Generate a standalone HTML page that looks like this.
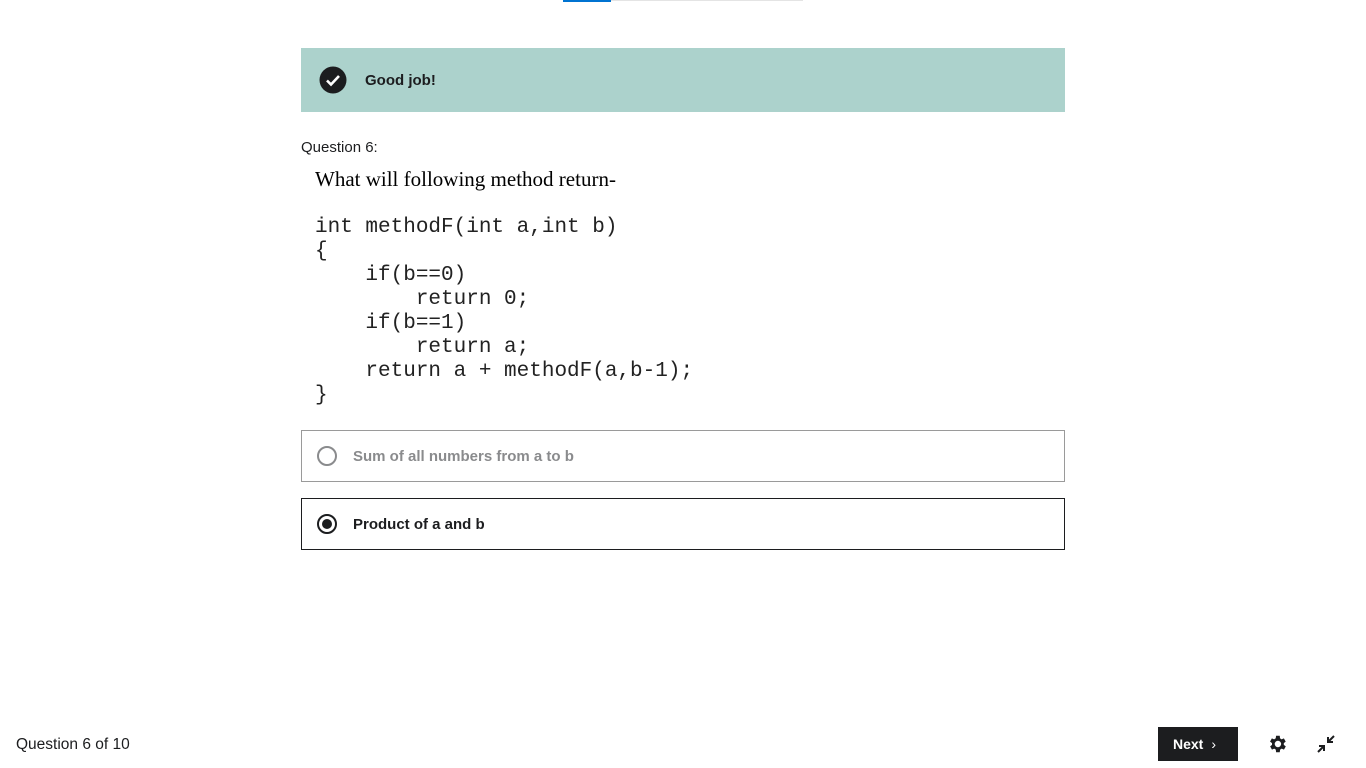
<!DOCTYPE html>
<html><head><meta charset="utf-8"><style>
body{margin:0;width:1366px;height:768px;position:relative;background:#fff;font-family:"Liberation Sans",sans-serif;color:#1c1d1f;overflow:hidden}
.a{position:absolute}
</style></head><body>
<div class="a" style="left:563px;top:0;width:48px;height:2px;background:#0073d1"></div>
<div class="a" style="left:611px;top:0;width:192px;height:1px;background:#e4e4e4"></div>
<div class="a" style="left:301px;top:48px;width:764px;height:64px;background:#acd2cc"></div>
<svg class="a" style="left:319px;top:66px" width="28" height="28" viewBox="0 0 28 28"><circle cx="14" cy="14" r="13.5" fill="#1c1d1f"/><path d="M8 14.5l4 4 8-8.5" stroke="#fff" stroke-width="2.6" fill="none"/></svg>
<div class="a" style="left:365px;top:72px;font-size:15px;font-weight:bold">Good job!</div>
<div class="a" style="left:301px;top:139px;font-size:15px">Question 6:</div>
<div class="a" style="left:315px;top:167px;font-family:'Liberation Serif',serif;font-size:21px;color:#000">What will following method return-</div>
<pre class="a" style="left:315px;top:216px;margin:0;font-family:'Liberation Mono',monospace;font-size:21px;line-height:24px;color:#222">int methodF(int a,int b)
{
    if(b==0)
        return 0;
    if(b==1)
        return a;
    return a + methodF(a,b-1);
}</pre>
<div class="a" style="left:301px;top:430px;width:762px;height:50px;border:1px solid #9a9a9a"></div>
<div class="a" style="left:317px;top:446px;width:16px;height:16px;border:2px solid #8a8b8d;border-radius:50%"></div>
<div class="a" style="left:353px;top:448px;font-size:15px;font-weight:bold;color:#8a8b8d">Sum of all numbers from a to b</div>
<div class="a" style="left:301px;top:498px;width:762px;height:50px;border:1px solid #1c1d1f"></div>
<div class="a" style="left:317px;top:514px;width:16px;height:16px;border:2px solid #1c1d1f;border-radius:50%"></div>
<div class="a" style="left:322px;top:519px;width:10px;height:10px;background:#1c1d1f;border-radius:50%"></div>
<div class="a" style="left:353px;top:516px;font-size:15px;font-weight:bold">Product of a and b</div>
<div class="a" style="left:16px;top:736px;font-size:15.5px">Question 6 of 10</div>
<div class="a" style="left:1158px;top:727px;width:80px;height:34px;background:#1c1d1f;color:#fff;font-size:14px;font-weight:bold;line-height:34px"><span style="margin-left:15px">Next</span><span style="margin-left:8px;font-weight:normal">›</span></div>
<svg class="a" style="left:1266px;top:733px" width="22" height="22" viewBox="0 0 24 24"><path fill="#1c1d1f" d="M19.4 13a7.5 7.5 0 000-2l2.1-1.6-2-3.5-2.5 1a7 7 0 00-1.7-1L15 3h-4l-.4 2.9a7 7 0 00-1.7 1l-2.5-1-2 3.5L6.6 11a7.5 7.5 0 000 2l-2.1 1.6 2 3.5 2.5-1a7 7 0 001.7 1L11 21h4l.4-2.9a7 7 0 001.7-1l2.5 1 2-3.5zM13 15.5a3.5 3.5 0 110-7 3.5 3.5 0 010 7z"/></svg>
<svg class="a" style="left:1316px;top:734px" width="20" height="20" viewBox="0 0 20 20"><path d="M2 18l6-6M3 12h5v5M18 2l-6 6M12 3v5h5" stroke="#1c1d1f" stroke-width="2" fill="none"/></svg>
</body></html>
